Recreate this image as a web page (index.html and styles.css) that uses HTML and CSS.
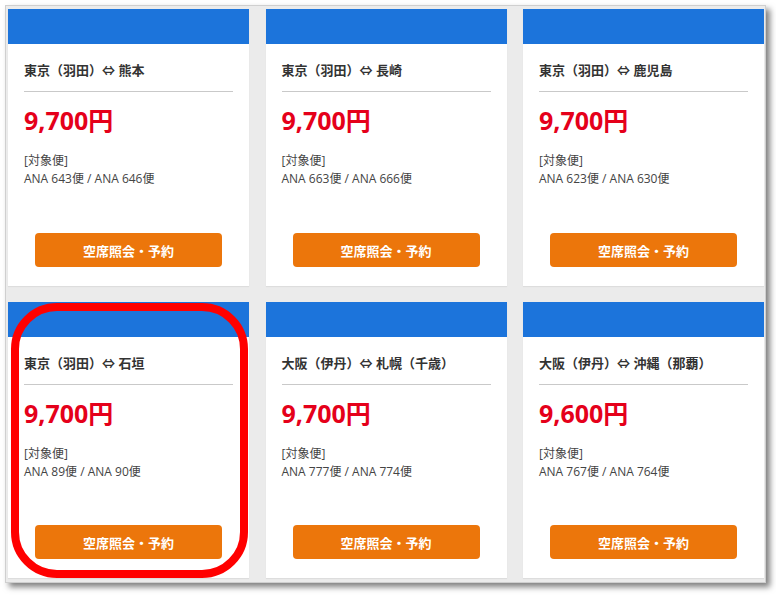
FILE: index.html
```html
<!DOCTYPE html>
<html lang="ja">
<head>
<meta charset="utf-8">
<title>空席照会</title>
<link rel="stylesheet" href="styles.css">
</head>
<body>
<div class="frame">
  <div class="grid">
    <div class="card">
      <div class="card-head"></div>
      <div class="card-body">
        <h3 class="route">東京（羽田）⇔ 熊本</h3>
        <p class="price">9,700円</p>
        <p class="flights">[対象便]<br>ANA 643便 / ANA 646便</p>
        <a class="btn">空席照会・予約</a>
      </div>
    </div>
    <div class="card">
      <div class="card-head"></div>
      <div class="card-body">
        <h3 class="route">東京（羽田）⇔ 長崎</h3>
        <p class="price">9,700円</p>
        <p class="flights">[対象便]<br>ANA 663便 / ANA 666便</p>
        <a class="btn">空席照会・予約</a>
      </div>
    </div>
    <div class="card">
      <div class="card-head"></div>
      <div class="card-body">
        <h3 class="route">東京（羽田）⇔ 鹿児島</h3>
        <p class="price">9,700円</p>
        <p class="flights">[対象便]<br>ANA 623便 / ANA 630便</p>
        <a class="btn">空席照会・予約</a>
      </div>
    </div>
    <div class="card">
      <div class="card-head"></div>
      <div class="card-body">
        <h3 class="route">東京（羽田）⇔ 石垣</h3>
        <p class="price">9,700円</p>
        <p class="flights">[対象便]<br>ANA 89便 / ANA 90便</p>
        <a class="btn">空席照会・予約</a>
      </div>
      <div class="highlight"></div>
    </div>
    <div class="card">
      <div class="card-head"></div>
      <div class="card-body">
        <h3 class="route">大阪（伊丹）⇔ 札幌（千歳）</h3>
        <p class="price">9,700円</p>
        <p class="flights">[対象便]<br>ANA 777便 / ANA 774便</p>
        <a class="btn">空席照会・予約</a>
      </div>
    </div>
    <div class="card">
      <div class="card-head"></div>
      <div class="card-body">
        <h3 class="route">大阪（伊丹）⇔ 沖縄（那覇）</h3>
        <p class="price">9,600円</p>
        <p class="flights">[対象便]<br>ANA 767便 / ANA 764便</p>
        <a class="btn">空席照会・予約</a>
      </div>
    </div>
  </div>
</div>
</body>
</html>
```
FILE: styles.css
```css
* { box-sizing: border-box; }
html, body { margin: 0; padding: 0; background: #ffffff; }
body {
  font-family: "Open Sans", "Noto Sans CJK JP", sans-serif;
  color: #333;
  width: 776px;
  height: 595px;
  overflow: hidden;
}
.frame {
  margin: 5px 0 0 5px;
  width: 761px;
  height: 578px;
  background: #ebebeb;
  border: 1px solid #cfcfcf;
  padding: 3px 0 0 2px;
  box-shadow: 4px 4px 6px rgba(0, 0, 0, 0.5);
}
.grid {
  display: grid;
  grid-template-columns: 241px 241px 241px;
  grid-template-rows: 277px 276px;
  column-gap: 16.5px;
  row-gap: 16px;
  width: 756px;
}
.card {
  position: relative;
  background: #fff;
  display: flex;
  flex-direction: column;
  box-shadow: 0 1px 1px rgba(0,0,0,0.06);
}
.card-head {
  height: 35px;
  background: #1c74db;
}
.card-body {
  flex: 1;
  display: flex;
  flex-direction: column;
  padding: 18px 16px 19px 16px;
}
.route {
  margin: 0;
  font-size: 13px;
  line-height: 16px;
  font-weight: 700;
  color: #333;
  padding-bottom: 13px;
  border-bottom: 1px solid #c9c9c9;
}
.price {
  margin: 13px 0 0;
  font-size: 25px;
  line-height: 30px;
  font-weight: 700;
  color: #e5001a;
}
.flights {
  margin: 17px 0 0;
  font-size: 12px;
  line-height: 18px;
  color: #444;
}
.btn {
  margin-top: auto;
  align-self: center;
  width: 187px;
  height: 34px;
  border-radius: 4px;
  background: #ec760b;
  color: #fff;
  font-size: 13px;
  font-weight: 700;
  display: flex;
  align-items: center;
  justify-content: center;
}
.highlight {
  position: absolute;
  left: 3px;
  top: 1px;
  width: 237px;
  height: 275px;
  border: 8px solid #ff0000;
  border-radius: 46px;
  pointer-events: none;
}
```
